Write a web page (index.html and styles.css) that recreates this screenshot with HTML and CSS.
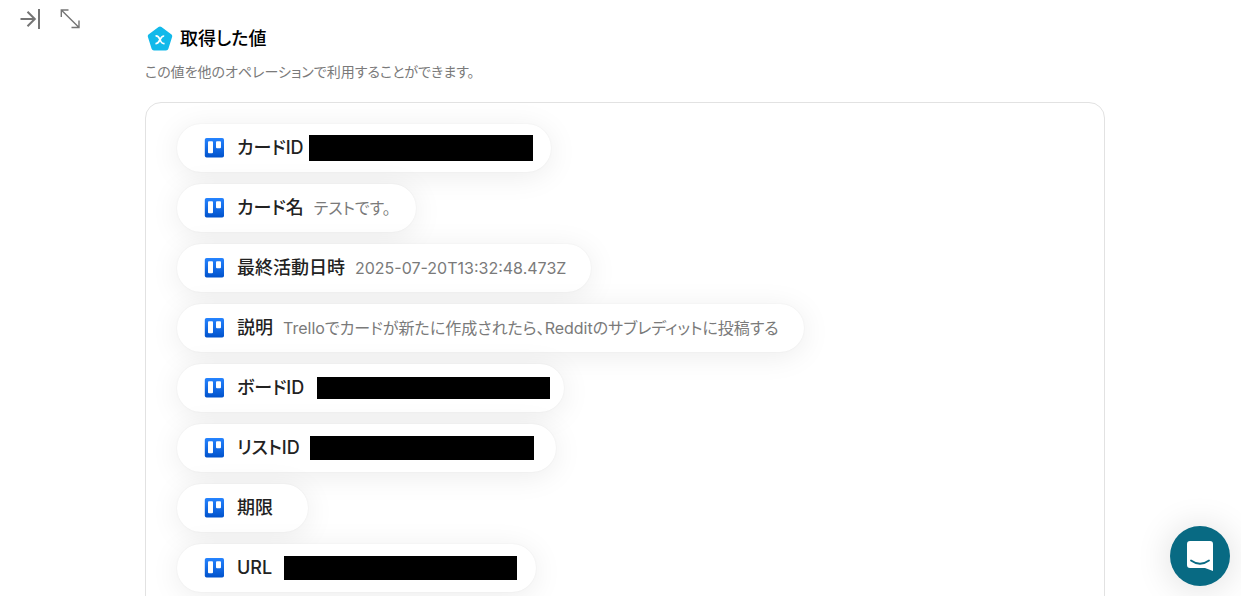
FILE: index.html
```html
<!DOCTYPE html>
<html lang="ja">
<head>
    <meta charset="UTF-8">
    <meta name="viewport" content="width=device-width, initial-scale=1.0">
    <title>取得した値</title>
    <link rel="stylesheet" href="styles.css">
</head>
<body>
    <svg class="defs" width="0" height="0" aria-hidden="true">
        <defs>
            <linearGradient id="blue" x1="0" y1="0" x2="0" y2="1">
                <stop offset="0" stop-color="#2684ff"/>
                <stop offset="1" stop-color="#0052cc"/>
            </linearGradient>
            <symbol id="trello" viewBox="0 0 20 20">
                <rect x="0.8" y="0" width="19.2" height="19.5" rx="1.8" fill="url(#blue)"/>
                <rect x="4" y="3.2" width="5" height="12" rx="1" fill="#fff"/>
                <rect x="12" y="3.2" width="5" height="7" rx="1" fill="#fff"/>
            </symbol>
        </defs>
    </svg>

    <div class="toolbar">
        <button type="button" aria-label="閉じる">
            <svg width="20" height="20" viewBox="0 0 20 20" fill="none" stroke="#757575" stroke-width="2">
                <path d="M0.5 10H14.5M7.5 2.8L14.8 10L7.5 17.2M19 0V20"/>
            </svg>
        </button>
        <button type="button" aria-label="拡大">
            <svg width="20" height="20" viewBox="0 0 20 20" fill="none" stroke="#757575" stroke-width="1.4">
                <path d="M1.3 8V1H8.5M1.3 1L19 18.5M19 11.5V18.5H11.5"/>
            </svg>
        </button>
    </div>

    <main class="content">
        <div class="heading">
            <svg width="26" height="26" viewBox="0 0 26 26">
                <path d="M13 3L22.7 10.2L19 22H7L3.3 10.2Z" fill="#12b9ea" stroke="#12b9ea" stroke-width="5" stroke-linejoin="round"/>
                <path d="M8.5 10C11 9.6 11.8 10.8 13 13.8C14.2 16.8 15 17.9 17.6 17.5M17.2 10C14.8 9.8 14.1 11.4 13 13.7C11.7 16.4 11 17.8 8.4 17.5" fill="none" stroke="#fff" stroke-width="1.7"/>
            </svg>
            <h1>取得した値</h1>
        </div>
        <p class="description">この値を他のオペレーションで利用することができます。</p>

        <ul class="card">
            <li class="item">
                <svg class="icon"><use href="#trello"/></svg>
                <span class="label">カードID</span>
                <span class="mask mask-card"></span>
            </li>
            <li class="item">
                <svg class="icon"><use href="#trello"/></svg>
                <span class="label">カード名</span>
                <span class="value">テストです。</span>
            </li>
            <li class="item">
                <svg class="icon"><use href="#trello"/></svg>
                <span class="label">最終活動日時</span>
                <span class="value">2025-07-20T13:32:48.473Z</span>
            </li>
            <li class="item">
                <svg class="icon"><use href="#trello"/></svg>
                <span class="label">説明</span>
                <span class="value">Trelloでカードが新たに作成されたら、Redditのサブレディットに投稿する</span>
            </li>
            <li class="item">
                <svg class="icon"><use href="#trello"/></svg>
                <span class="label">ボードID</span>
                <span class="mask mask-board"></span>
            </li>
            <li class="item">
                <svg class="icon"><use href="#trello"/></svg>
                <span class="label">リストID</span>
                <span class="mask mask-list"></span>
            </li>
            <li class="item">
                <svg class="icon"><use href="#trello"/></svg>
                <span class="label">期限</span>
                <span class="value"></span>
            </li>
            <li class="item">
                <svg class="icon"><use href="#trello"/></svg>
                <span class="label">URL</span>
                <span class="mask mask-url"></span>
            </li>
        </ul>
    </main>

    <button type="button" class="chat" aria-label="チャット">
        <svg width="28" height="32" viewBox="0 0 28 32">
            <path d="M4 1H24Q27 1 27 4V31L19 28H4Q1 28 1 25V4Q1 1 4 1Z" fill="#fff"/>
            <path d="M5 20.5Q14 27 23 20.5" fill="none" stroke="#086a83" stroke-width="1.8" stroke-linecap="round"/>
        </svg>
    </button>
</body>
</html>
```

FILE: styles.css
```css
* {
    box-sizing: border-box;
}
body {
    margin: 0;
    height: 100vh;
    overflow: hidden;
    background-color: #fff;
    color: #222;
    font-family: Inter, "Noto Sans CJK JP", sans-serif;
    font-feature-settings: "palt";
}
button {
    padding: 0;
    border: none;
    background: none;
    cursor: pointer;
}
.defs {
    position: absolute;
}
.toolbar {
    position: absolute;
    top: 9px;
    left: 20px;
    display: flex;
    gap: 20px;
}
.toolbar svg {
    display: block;
}
.content {
    margin: 0 136px 0 145px;
    padding-top: 25px;
}
.heading {
    display: flex;
    align-items: center;
    gap: 7px;
    height: 28px;
    padding-left: 2px;
}
h1 {
    margin: 0;
    font-size: 18px;
    font-weight: 500;
    line-height: 28px;
    color: #000;
}
.description {
    margin: 9px 0 20px;
    font-size: 14px;
    line-height: 20px;
    color: #7a7a7a;
}
.card {
    display: flex;
    flex-direction: column;
    align-items: flex-start;
    gap: 12px;
    margin: 0;
    padding: 21px 31px;
    border: 1px solid #e2e2e2;
    border-radius: 16px;
    list-style: none;
}
.item {
    display: flex;
    align-items: center;
    height: 48px;
    padding: 0 25px 1px 27px;
    border-radius: 24px;
    background-color: #fff;
    box-shadow: 0 4px 30px rgba(0, 0, 0, 0.08), 0 0 2px rgba(0, 0, 0, 0.06);
    line-height: 24px;
    white-space: nowrap;
}
.icon {
    width: 20px;
    height: 20px;
    margin-right: 13px;
}
.label {
    margin-right: 10px;
    font-size: 18px;
    font-weight: 500;
}
.value {
    font-size: 16px;
    color: #7a7a7a;
}
.mask {
    height: 24px;
    background-color: #000;
}
.mask-card {
    width: 224px;
    height: 26px;
    margin: 0 -7px 0 -5px;
}
.mask-board {
    width: 233px;
    height: 22px;
    margin: 0 -11px 0 3px;
}
.mask-list {
    width: 224px;
    margin-right: -3px;
}
.mask-url {
    width: 233px;
    margin: 0 -6px 0 2px;
}
.chat {
    position: absolute;
    right: 11px;
    bottom: 10px;
    display: flex;
    align-items: center;
    justify-content: center;
    width: 60px;
    height: 60px;
    border-radius: 50%;
    background-color: #086a83;
    box-shadow: 0 2px 36px rgba(0, 0, 0, 0.14);
}
```
